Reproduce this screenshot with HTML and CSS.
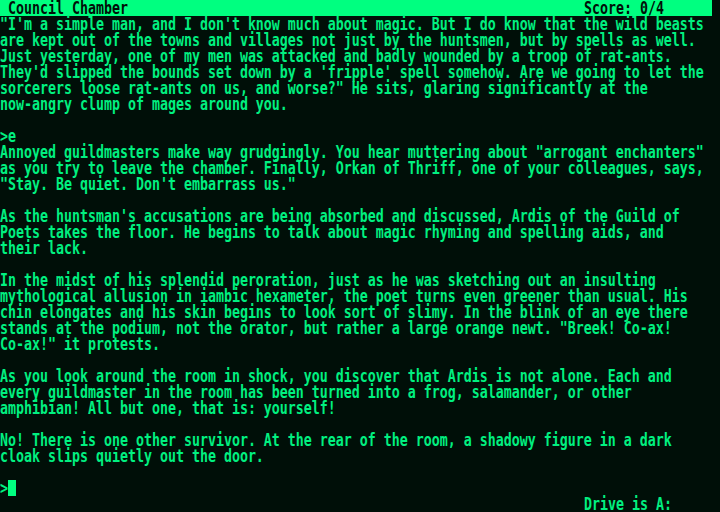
FILE: index.html
```html
<!DOCTYPE html>
<html>
<head>
<meta charset="utf-8">
<link rel="stylesheet" href="styles.css">
</head>
<body>
<div class="screen">
  <div class="status">
    <div class="ln title"> Council Chamber</div>
    <div class="ln score">Score: 0/4</div>
  </div>
  <div class="text">
    <div class="ln">"I'm a simple man, and I don't know much about magic. But I do know that the wild beasts</div>
    <div class="ln">are kept out of the towns and villages not just by the huntsmen, but by spells as well.</div>
    <div class="ln">Just yesterday, one of my men was attacked and badly wounded by a troop of rat-ants.</div>
    <div class="ln">They'd slipped the bounds set down by a 'fripple' spell somehow. Are we going to let the</div>
    <div class="ln">sorcerers loose rat-ants on us, and worse?" He sits, glaring significantly at the</div>
    <div class="ln">now-angry clump of mages around you.</div>
    <div class="ln"></div>
    <div class="ln">&gt;e</div>
    <div class="ln">Annoyed guildmasters make way grudgingly. You hear muttering about "arrogant enchanters"</div>
    <div class="ln">as you try to leave the chamber. Finally, Orkan of Thriff, one of your colleagues, says,</div>
    <div class="ln">"Stay. Be quiet. Don't embarrass us."</div>
    <div class="ln"></div>
    <div class="ln">As the huntsman's accusations are being absorbed and discussed, Ardis of the Guild of</div>
    <div class="ln">Poets takes the floor. He begins to talk about magic rhyming and spelling aids, and</div>
    <div class="ln">their lack.</div>
    <div class="ln"></div>
    <div class="ln">In the midst of his splendid peroration, just as he was sketching out an insulting</div>
    <div class="ln">mythological allusion in iambic hexameter, the poet turns even greener than usual. His</div>
    <div class="ln">chin elongates and his skin begins to look sort of slimy. In the blink of an eye there</div>
    <div class="ln">stands at the podium, not the orator, but rather a large orange newt. "Breek! Co-ax!</div>
    <div class="ln">Co-ax!" it protests.</div>
    <div class="ln"></div>
    <div class="ln">As you look around the room in shock, you discover that Ardis is not alone. Each and</div>
    <div class="ln">every guildmaster in the room has been turned into a frog, salamander, or other</div>
    <div class="ln">amphibian! All but one, that is: yourself!</div>
    <div class="ln"></div>
    <div class="ln">No! There is one other survivor. At the rear of the room, a shadowy figure in a dark</div>
    <div class="ln">cloak slips quietly out the door.</div>
    <div class="ln"></div>
    <div class="prompt"><div class="ln">&gt;</div><span class="cursor"></span></div>
    <div class="ln drive">Drive is A:</div>
  </div>
</div>
</body>
</html>
```
FILE: styles.css
```css
html, body {
  margin: 0;
  padding: 0;
  background: #000f08;
}
.screen {
  width: 720px;
  height: 512px;
  overflow: hidden;
  background: #000f08;
  color: #00f080;
  font-family: "DejaVu Sans Mono", monospace;
  font-weight: bold;
  font-size: 13.29px;
}
.ln {
  height: 11.7647px;
  line-height: 11.7647px;
  margin-bottom: 4.2353px;
  white-space: pre;
  transform-origin: 0 0;
  transform: scaleY(1.36);
}
.status {
  width: 712px;
  height: 16px;
  background: #00ff80;
  color: #000f08;
  display: flex;
  justify-content: space-between;
}
.score {
  padding-right: 48px;
}
.prompt {
  display: flex;
  height: 16px;
}
.prompt .ln {
  margin-bottom: 0;
}
.cursor {
  width: 8px;
  height: 16px;
  background: #00ff80;
}
.drive {
  padding-left: 584px;
}
```
